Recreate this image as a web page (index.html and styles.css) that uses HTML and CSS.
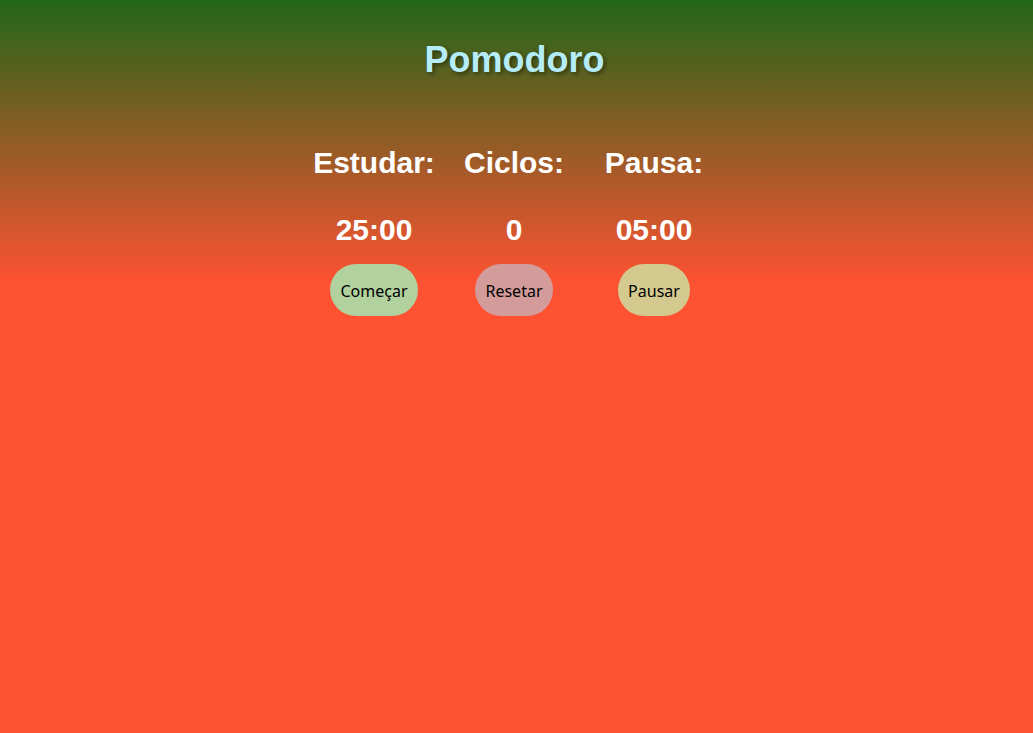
FILE: index.html
```html
<!DOCTYPE html>
<html lang="pt-BR">
<head>
<meta charset="utf-8">
<title>Pomodoro</title>
<link rel="stylesheet" href="styles.css">
</head>
<body>
<main class="app">
  <h1 class="title">Pomodoro</h1>
  <section class="panel">
    <div class="col">
      <h2 class="label">Estudar:</h2>
      <p class="value">25:00</p>
      <button class="btn btn-start">Começar</button>
    </div>
    <div class="col">
      <h2 class="label">Ciclos:</h2>
      <p class="value">0</p>
      <button class="btn btn-reset">Resetar</button>
    </div>
    <div class="col">
      <h2 class="label">Pausa:</h2>
      <p class="value">05:00</p>
      <button class="btn btn-pause">Pausar</button>
    </div>
  </section>
</main>
</body>
</html>
```
FILE: styles.css
```css
html, body {
  margin: 0;
  padding: 0;
  height: 100%;
}
body {
  background: linear-gradient(to bottom, #236619 0px, #ff5232 285px, #ff5232 100%);
  font-family: "Liberation Sans", Arial, sans-serif;
  color: #fff;
}
.app {
  display: flex;
  flex-direction: column;
  align-items: center;
  padding-top: 39px;
}
.title {
  margin: 0 4px 0 0;
  font-size: 36px;
  line-height: 42px;
  font-weight: bold;
  color: #b5ecf7;
  text-shadow: 2px 2px 4px rgba(0, 0, 0, 0.45);
}
.panel {
  display: flex;
  justify-content: center;
  margin-top: 65px;
  margin-left: -5px;
}
.col {
  width: 140px;
  display: flex;
  flex-direction: column;
  align-items: center;
}
.label {
  margin: 0;
  font-size: 30px;
  line-height: 34px;
  font-weight: bold;
  white-space: nowrap;
}
.value {
  margin: 33px 0 0;
  font-size: 30px;
  line-height: 34px;
  font-weight: bold;
}
.btn {
  margin-top: 17px;
  height: 52px;
  padding: 2px 10px 0;
  border: none;
  border-radius: 26px;
  font-family: "Noto Sans", "Open Sans", sans-serif;
  font-size: 16px;
  color: #000;
  cursor: pointer;
}
.btn-start { background: #b1d29f; }
.btn-reset { background: #d39c9b; }
.btn-pause { background: #d4c98f; }
```
